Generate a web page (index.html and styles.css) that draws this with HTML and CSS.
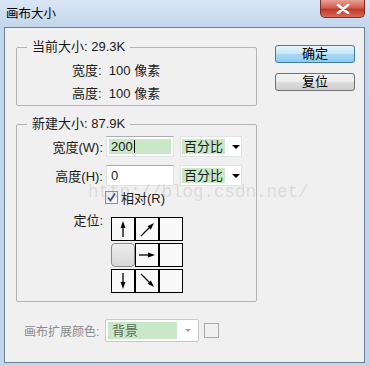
FILE: index.html
```html
<!DOCTYPE html>
<html lang="zh-CN">

<head>
    <meta charset="UTF-8">
    <title>画布大小</title>
    <link rel="stylesheet" href="styles.css">
</head>

<body>
    <div class="window">
        <div class="titlebar">
            <span class="title">画布大小</span>
            <div class="close">
                <svg width="14" height="10" viewBox="0 0 14 10">
                    <path d="M2 1 L12 9 M12 1 L2 9" stroke="#fff" stroke-width="2.6" stroke-linecap="round" />
                </svg>
            </div>
        </div>
        <div class="client">
            <div class="main">
                <fieldset class="group current">
                    <legend>当前大小: 29.3K</legend>
                    <div class="info-row">宽度:&nbsp; 100 像素</div>
                    <div class="info-row">高度:&nbsp; 100 像素</div>
                </fieldset>

                <fieldset class="group new">
                    <legend>新建大小: 87.9K</legend>
                    <div class="field-row">
                        <label class="field-label">宽度(W):</label>
                        <div class="input"><span class="fill">200<span class="caret"></span></span></div>
                        <div class="select"><span class="fill">百分比</span><span class="arrow"></span></div>
                    </div>
                    <div class="field-row second">
                        <label class="field-label">高度(H):</label>
                        <div class="input"><span class="plain">0</span></div>
                        <div class="select"><span class="fill">百分比</span><span class="arrow"></span></div>
                    </div>
                    <div class="check-row">
                        <span class="checkbox">
                            <svg width="11" height="11" viewBox="0 0 11 11">
                                <path d="M2 5.5 L4.5 8.5 L9 1.5" fill="none" stroke="#3a4f8c" stroke-width="1.8" />
                            </svg>
                        </span>
                        <span>相对(R)</span>
                    </div>
                    <div class="anchor-row">
                        <label class="field-label">定位:</label>
                        <div class="anchor-grid">
                            <div class="cell">
                                <svg width="22" height="22" viewBox="0 0 22 22">
                                    <path d="M11 19 L11 8" stroke="#000" stroke-width="1.3" />
                                    <path d="M11 3 L8.6 10 L13.4 10 Z" fill="#000" />
                                </svg>
                            </div>
                            <div class="cell">
                                <svg width="22" height="22" viewBox="0 0 22 22">
                                    <path d="M5 18 L14 9" stroke="#000" stroke-width="1.3" />
                                    <path d="M18 5 L11.5 8.2 L14.8 11.5 Z" fill="#000" />
                                </svg>
                            </div>
                            <div class="cell"></div>
                            <div class="cell selected"></div>
                            <div class="cell">
                                <svg width="22" height="22" viewBox="0 0 22 22">
                                    <path d="M3 11 L14 11" stroke="#000" stroke-width="1.3" />
                                    <path d="M19 11 L12 8.6 L12 13.4 Z" fill="#000" />
                                </svg>
                            </div>
                            <div class="cell"></div>
                            <div class="cell">
                                <svg width="22" height="22" viewBox="0 0 22 22">
                                    <path d="M11 3 L11 14" stroke="#000" stroke-width="1.3" />
                                    <path d="M11 19 L8.6 12 L13.4 12 Z" fill="#000" />
                                </svg>
                            </div>
                            <div class="cell">
                                <svg width="22" height="22" viewBox="0 0 22 22">
                                    <path d="M5 4 L14 13" stroke="#000" stroke-width="1.3" />
                                    <path d="M18 17 L11.5 13.8 L14.8 10.5 Z" fill="#000" />
                                </svg>
                            </div>
                            <div class="cell"></div>
                        </div>
                    </div>
                </fieldset>

                <div class="ext-row">
                    <span class="ext-label">画布扩展颜色:</span>
                    <div class="ext-select"><span class="fill">背景</span><span class="arrow"></span></div>
                    <span class="ext-box"></span>
                </div>
            </div>

            <div class="buttons">
                <button class="button default">确定</button>
                <button class="button">复位</button>
            </div>
        </div>
        <div class="watermark">http://blog.csdn.net/</div>
    </div>
</body>

</html>
```

FILE: styles.css
```css
body {
    margin: 0;
    background: #c4d7ec;
    font-family: 'Liberation Sans', 'Noto Sans CJK SC', sans-serif;
    font-size: 13px;
    color: #1a1a1a;
}

.window {
    position: relative;
    width: 370px;
    height: 366px;
    overflow: hidden;
    background: linear-gradient(180deg, #d9e6f4 0, #c2d6ec 27px, #c1d4ea 100%);
}

.titlebar {
    height: 27px;
    display: flex;
    justify-content: space-between;
    align-items: flex-start;
}

.title {
    padding: 7px 0 0 6px;
    line-height: 14px;
    font-size: 12.5px;
    color: #000;
}

.close {
    width: 45px;
    height: 18px;
    margin-right: 5px;
    box-sizing: border-box;
    border: 1px solid #7d2f28;
    border-top: none;
    border-radius: 0 0 5px 5px;
    background: linear-gradient(180deg, #e7a195 0, #d25f4f 45%, #c0392b 55%, #d66a55 100%);
    display: flex;
    align-items: center;
    justify-content: center;
}

.client {
    display: flex;
    height: 336px;
    margin: 0 5px 0 4px;
    box-sizing: border-box;
    border: 1px solid #6f8096;
    background: #f0f0f0;
}

.main {
    width: 241px;
    margin-left: 11px;
    padding-top: 12px;
}

/* group boxes */
.group {
    margin: 0;
    padding: 0;
    border: 1px solid #b4b4b4;
    border-radius: 2px;
}

.group legend {
    margin-left: 10px;
    padding: 0 5px;
    line-height: 14px;
}

.current {
    padding-top: 5px;
}

.info-row {
    padding-left: 55px;
    line-height: 23px;
}

.new {
    margin-top: 11px;
    padding: 5px 0 8px 0;
}

.field-row {
    display: flex;
    align-items: center;
    height: 21px;
}

.field-row.second {
    margin-top: 8px;
}

.field-label {
    width: 86px;
    margin-right: 3px;
    text-align: right;
    white-space: nowrap;
}

.input {
    width: 68px;
    height: 21px;
    box-sizing: border-box;
    border: 1px solid #dfe3e8;
    border-top-color: #abadb3;
    background: #fff;
    padding: 2px;
    display: flex;
}

.input .fill,
.input .plain {
    flex: 1;
    padding-left: 2px;
    line-height: 15px;
}

.fill {
    background: #c8e8c8;
    white-space: nowrap;
}

.caret {
    display: inline-block;
    width: 1px;
    height: 13px;
    margin-left: 1px;
    background: #000;
    vertical-align: -2px;
}

.select {
    width: 62px;
    height: 21px;
    margin-left: 6px;
    box-sizing: border-box;
    border: 1px solid #e2e2e2;
    background: #fff;
    display: flex;
    align-items: center;
    padding: 2px 0 2px 1px;
}

.select .fill {
    padding: 0 2px;
    line-height: 15px;
}

.arrow {
    width: 0;
    height: 0;
    margin-left: 7px;
    border-left: 4px solid transparent;
    border-right: 4px solid transparent;
    border-top: 4px solid #000;
}

.check-row {
    display: flex;
    align-items: center;
    margin: 4px 0 0 88px;
    height: 14px;
    gap: 3px;
}

.checkbox {
    width: 13px;
    height: 13px;
    box-sizing: border-box;
    border: 1px solid #8f8f8f;
    background: linear-gradient(135deg, #e4e4e4, #fbfbfb);
    display: flex;
    align-items: center;
    justify-content: center;
}

.anchor-row {
    display: flex;
    align-items: flex-start;
    margin-top: 10px;
}

.anchor-row .field-label {
    line-height: 14px;
}

.anchor-grid {
    display: grid;
    grid-template-columns: repeat(3, 24px);
    grid-auto-rows: 24px;
    row-gap: 2px;
    margin: 3px 0 0 5px;
}

.cell {
    box-sizing: border-box;
    border: 1px solid #000;
    background: #f9f9f9;
    display: flex;
    align-items: center;
    justify-content: center;
}

.cell.selected {
    border: 1px solid #8c8c8c;
    border-radius: 4px;
    background: linear-gradient(180deg, #ececec, #d9d9d9);
}

/* bottom row */
.ext-row {
    display: flex;
    align-items: center;
    margin-top: 17px;
    padding-left: 8px;
    height: 23px;
}

.ext-label {
    width: 81px;
    font-size: 12px;
    color: #8a8a8a;
    white-space: nowrap;
}

.ext-select {
    width: 94px;
    height: 23px;
    box-sizing: border-box;
    border: 1px solid #c9c9c9;
    border-radius: 2px;
    background: #fff;
    display: flex;
    align-items: center;
    padding: 2px;
}

.ext-select .fill {
    width: 65px;
    height: 17px;
    padding-left: 4px;
    line-height: 17px;
    color: #5a6a5a;
}

.ext-select .arrow {
    margin-left: 8px;
    border-left-width: 3px;
    border-right-width: 3px;
    border-top: 3px solid #a0a0a0;
}

.ext-box {
    width: 15px;
    height: 15px;
    margin-left: 5px;
    box-sizing: border-box;
    border: 1px solid #a9a9a9;
}

/* buttons */
.buttons {
    display: flex;
    flex-direction: column;
    gap: 10px;
    margin-left: 18px;
    padding-top: 17px;
}

.button {
    width: 80px;
    height: 18px;
    padding: 0;
    font-family: 'Liberation Sans', 'Noto Sans CJK SC', sans-serif;
    font-size: 13px;
    line-height: 14px;
    color: #000;
    border: 1px solid #707070;
    border-radius: 3px;
    background: linear-gradient(180deg, #f4f4f4 0, #ebebeb 50%, #dddddd 51%, #cfcfcf 100%);
}

.button.default {
    border-color: #3c7fb1;
    background: linear-gradient(180deg, #e8f6fd 0, #c4e5f6 50%, #a9d9f3 51%, #8fcbee 100%);
}

.watermark {
    position: absolute;
    left: 88px;
    top: 183px;
    font-family: 'Liberation Mono', monospace;
    font-size: 17.5px;
    line-height: 18px;
    color: rgba(150, 150, 150, 0.25);
    pointer-events: none;
}
```
